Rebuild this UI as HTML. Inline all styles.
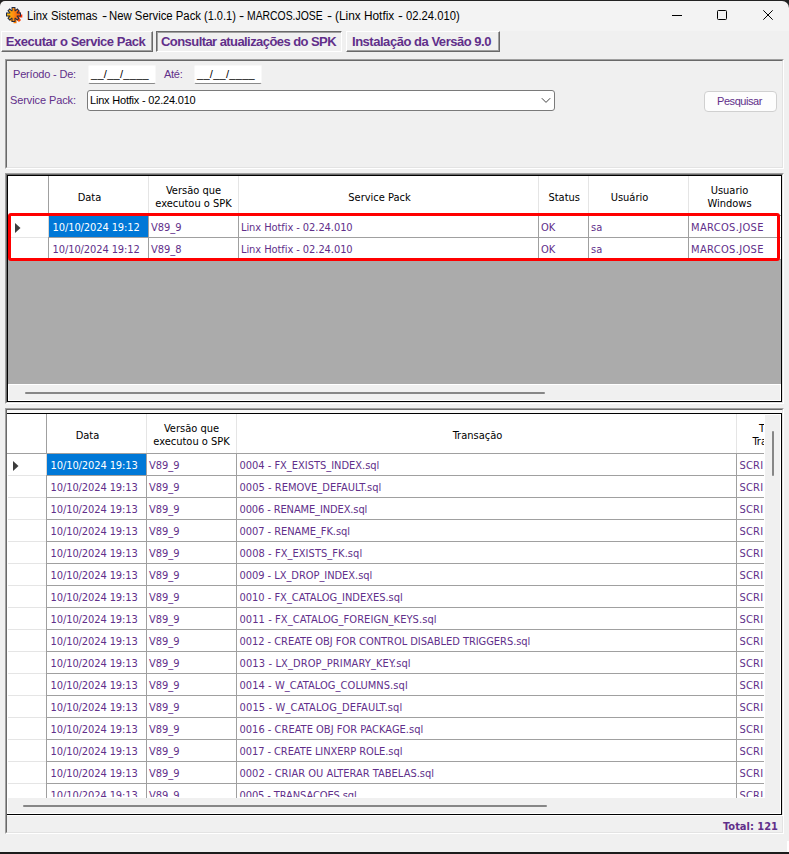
<!DOCTYPE html><html><head><meta charset='utf-8'><title>Linx Sistemas - New Service Pack</title><style>
*{box-sizing:border-box;margin:0;padding:0}
html,body{width:789px;height:854px;overflow:hidden;background:#f0f0f0}
body{position:relative;font-family:"Liberation Sans",sans-serif;font-size:11px;color:#612f8a}
#win div,#win svg{position:absolute}
#win{position:absolute;left:0;top:0;width:789px;height:854px;overflow:hidden;background:#f0f0f0}
#topdark{left:0;top:0;width:789px;height:12px;background:#222}
#titlebar{left:0;top:1px;width:789px;height:30px;background:#f3f3f3;border-radius:5px 7px 0 0}
#title{left:0;top:9px;width:600px;height:15px;font-size:12px;line-height:15px;color:#000;white-space:nowrap}
#win span.c{position:absolute;top:0;white-space:nowrap;transform-origin:0 0}
.tab{top:31px;height:21px;padding-top:1px;font-weight:bold;font-size:13px;line-height:18px;padding-right:3px;letter-spacing:-0.47px;text-align:center;white-space:nowrap;background:#f0f0f0}
.raised{border-top:1px solid #fff;border-left:1px solid #fff;border-right:1px solid #696969;border-bottom:1px solid #696969;box-shadow:inset -1px -1px 0 #a0a0a0}
.sunken{border-top:1px solid #696969;border-left:1px solid #696969;border-right:1px solid #fff;border-bottom:1px solid #fff;box-shadow:inset 1px 1px 0 #a0a0a0}
.p3d{border-style:solid;border-width:1px;border-color:#a0a0a0 #fff #fff #a0a0a0}
.p3d>.in{left:0;top:0;right:0;bottom:0;border-style:solid;border-width:1px;border-color:#696969 #e3e3e3 #e3e3e3 #696969}
.lbl{white-space:nowrap;line-height:13px}
.g{font-family:"DejaVu Sans Condensed","Liberation Sans",sans-serif;font-size:11px}
.date{height:19px;width:68px;background:#fff;border:1px solid #f8f8f8;border-bottom-color:#8a8a8a;border-radius:2px;color:#000;line-height:13px;letter-spacing:0.29px;white-space:nowrap}
.date span{position:absolute;left:2px;top:2px}
.hl,.vl{background:#a0a0a0}
.hdr{color:#000;text-align:center;line-height:13px;white-space:nowrap}
.cell{white-space:nowrap;line-height:13px}
</style></head><body><div id='win' class='abs'>
<div id='topdark'></div><div id='titlebar'></div>
<svg style="left:4px;top:5px" width="21" height="21" viewBox="-10.5 -10.5 21 21"><defs><linearGradient id="og" gradientUnits="userSpaceOnUse" x1="-7" y1="0" x2="8" y2="0"><stop offset="0" stop-color="#ffc400"/><stop offset="0.5" stop-color="#ff8a12"/><stop offset="1" stop-color="#ff4200"/></linearGradient><linearGradient id="sg" gradientUnits="userSpaceOnUse" x1="-7" y1="0" x2="8" y2="0"><stop offset="0" stop-color="#ffa000"/><stop offset="0.55" stop-color="#ff7a00"/><stop offset="0.8" stop-color="#ff3a00"/><stop offset="1" stop-color="#ff2200"/></linearGradient></defs>
<g transform="translate(-1,-1)">
<g transform="translate(1.5,1.5)" stroke="url(#sg)" stroke-width="3" fill="none"><path d="M0 -7V7.3M-7 0H7.3M-4.6 -4.6L5 5M4.6 -4.6L-4.6 4.6"/></g>
<g stroke="#1f2a44" stroke-width="3.9" fill="none"><path d="M0 -7.5V7.5M-7.5 0H7.5"/></g>
<g stroke="#1f2a44" stroke-width="3.4" fill="none"><path d="M-5 -5L5 5M5 -5L-5 5"/></g>
<g stroke="url(#og)" stroke-width="2" fill="none"><path d="M0 -6.5V6.5M-6.5 0H6.5"/><path d="M-4.2 -4.2L4.2 4.2M4.2 -4.2L-4.2 4.2" stroke-width="1.6"/></g>
<circle cx="0" cy="0" r="3.4" fill="url(#og)"/></g></svg>
<div id='title'><span class='c' style='left:27.09px;transform:scaleX(0.943)'>Linx Sistemas</span> <span class='c' style='left:101.86px;transform:scaleX(1.2995)'>-</span> <span class='c' style='left:108.99px;transform:scaleX(0.9446)'>New Service Pack</span> <span class='c' style='left:203.85px;transform:scaleX(0.9168)'>(1.0.1)</span> <span class='c' style='left:238.56px;transform:scaleX(1.2995)'>-</span> <span class='c' style='left:247.16px;transform:scaleX(0.866)'>MARCOS.JOSE</span> <span class='c' style='left:326.88px;transform:scaleX(1.2678)'>-</span> <span class='c' style='left:334.6px;transform:scaleX(0.9871)'>(Linx Hotfix</span> <span class='c' style='left:398.31px;transform:scaleX(1.2044)'>-</span> <span class='c' style='left:405.82px;transform:scaleX(0.9353)'>02.24.010)</span></div>
<svg style="left:660px;top:0" width="129" height="31" viewBox="0 0 129 31" fill="none" stroke="#000" stroke-width="1"><path d="M12 15.5H22"/><rect x="57.5" y="10.5" width="9" height="9" rx="0.9"/><path d="M103.3 10.3L112.7 19.7M112.7 10.3L103.3 19.7"/></svg>
<div class='tab raised' style='left:1px;width:152px'>Executar o Service Pack</div>
<div class='tab sunken' style='left:156px;width:186px;letter-spacing:-0.57px;padding-right:1px'>Consultar atualizações do SPK</div>
<div class='tab raised' style='left:346px;width:154px'>Instalação da Versão 9.0</div>
<div class='p3d abs' style='left:5px;top:59px;width:779px;height:110px'><div class='in'></div></div>
<div class='lbl' style='left:13px;top:68px;letter-spacing:-0.19px'>Período - De:</div>
<div class='date' style='left:88px;top:65px'><span>__/__/____</span></div>
<div class='lbl' style='left:164px;top:68px;letter-spacing:-0.27px'>Até:</div>
<div class='date' style='left:194px;top:65px'><span>__/__/____</span></div>
<div class='lbl' style='left:10px;top:94px;letter-spacing:-0.1px'>Service Pack:</div>
<div style='left:87px;top:90px;width:468px;height:21px;background:#fff;border:1px solid #7a7a7a;border-radius:3px'></div>
<div class='lbl' style='left:90px;top:94px;color:#000;letter-spacing:-0.2px'>Linx Hotfix - 02.24.010</div>
<svg style="left:541px;top:97px" width="10" height="7" viewBox="0 0 10 7" fill="none" stroke="#444" stroke-width="1"><path d="M0.8 1.2L5 5.4L9.2 1.2"/></svg>
<div style='left:704px;top:91px;width:73px;height:21px;background:#fdfdfd;border:1px solid #d0d0d0;border-radius:4px'></div>
<div class='lbl' style='left:717px;top:95px;letter-spacing:-0.43px'>Pesquisar</div>
<div class='p3d abs' style='left:5px;top:173px;width:779px;height:231px'><div class='in'></div></div>
<div style='left:7px;top:175px;width:775px;height:227px;border:1px solid #000;background:#ababab'></div>
<div style='left:8px;top:176px;width:773px;height:84px;background:#fff'></div>
<div style='left:8px;top:384px;width:773px;height:17px;background:#f0f0f0;border:1px solid #fff'></div>
<div style='left:25px;top:392px;width:520px;height:2px;background:#868686;border-radius:1px'></div>
<div style='left:48px;top:176px;width:1px;height:39px;background:#a0a0a0'></div>
<div style='left:48px;top:215px;width:1px;height:45px;background:#a0a0a0'></div>
<div style='left:48px;top:216px;width:1px;height:21px;background:#dcd6d0'></div>
<div style='left:148px;top:176px;width:1px;height:39px;background:#e5e5e5'></div>
<div style='left:148px;top:215px;width:1px;height:45px;background:#a0a0a0'></div>
<div style='left:238px;top:176px;width:1px;height:39px;background:#e5e5e5'></div>
<div style='left:238px;top:215px;width:1px;height:45px;background:#a0a0a0'></div>
<div style='left:538px;top:176px;width:1px;height:39px;background:#e5e5e5'></div>
<div style='left:538px;top:215px;width:1px;height:45px;background:#a0a0a0'></div>
<div style='left:588px;top:176px;width:1px;height:39px;background:#e5e5e5'></div>
<div style='left:588px;top:215px;width:1px;height:45px;background:#a0a0a0'></div>
<div style='left:688px;top:176px;width:1px;height:39px;background:#e5e5e5'></div>
<div style='left:688px;top:215px;width:1px;height:45px;background:#a0a0a0'></div>
<div class='hl' style='left:8px;top:215px;width:773px;height:1px'></div>
<div style='left:8px;top:237px;width:40px;height:1px;background:#e5e5e5'></div>
<div class='hl' style='left:49px;top:237px;width:732px;height:1px'></div>
<div class='hl' style='left:8px;top:259px;width:773px;height:1px'></div>
<div class='hdr g' style='left:-10.5px;width:200px;top:191px'>Data</div>
<div class='hdr g' style='left:93.5px;width:200px;top:184px'>Versão que</div><div class='hdr g' style='left:93.5px;width:200px;top:197px'>executou o SPK</div>
<div class='hdr g' style='left:279.5px;width:200px;top:191px'>Service Pack</div>
<div class='hdr g' style='left:464.20000000000005px;width:200px;top:191px'>Status</div>
<div class='hdr g' style='left:529.5px;width:200px;top:191px'>Usuário</div>
<div class='hdr g' style='left:629.5px;width:200px;top:184px'>Usuario</div><div class='hdr g' style='left:629.5px;width:200px;top:197px'>Windows</div>
<div style='left:49px;top:216px;width:99px;height:21px;background:#0078d7'></div>
<div class='cell g' style='left:52.6px;top:221px;color:#fff;letter-spacing:-0.1px'>10/10/2024 19:12</div>
<div class='cell g' style='left:151px;top:221px'>V89_9</div>
<div class='cell g' style='left:241px;top:221px;letter-spacing:-0.07px'>Linx Hotfix - 02.24.010</div>
<div class='cell g' style='left:541px;top:221px'>OK</div>
<div class='cell g' style='left:591px;top:221px'>sa</div>
<div class='cell g' style='left:691px;top:221px;letter-spacing:0.35px'>MARCOS.JOSE</div>
<div class='cell g' style='left:52.6px;top:243px;color:#612f8a;letter-spacing:-0.1px'>10/10/2024 19:12</div>
<div class='cell g' style='left:151px;top:243px'>V89_8</div>
<div class='cell g' style='left:241px;top:243px;letter-spacing:-0.07px'>Linx Hotfix - 02.24.010</div>
<div class='cell g' style='left:541px;top:243px'>OK</div>
<div class='cell g' style='left:591px;top:243px'>sa</div>
<div class='cell g' style='left:691px;top:243px;letter-spacing:0.35px'>MARCOS.JOSE</div>
<svg style="left:15px;top:223px" width="6" height="10" viewBox="0 0 6 10"><path d="M0 0L5.5 5L0 10Z" fill="#3c3c3c"/></svg>
<div style='left:8px;top:213px;width:772px;height:48px;border:3px solid #ff0000;border-radius:3px'></div>
<div class='p3d abs' style='left:5px;top:408px;width:779px;height:426px'><div class='in'></div></div>
<div style='left:7px;top:410px;width:775px;height:3px;background:#f8f8f8'></div>
<div style='left:7px;top:413px;width:775px;height:402px;border:1px solid #000;border-left:none;background:#f0f0f0'></div>
<div style='left:7px;top:414px;width:774px;height:400px;background:#f0f0f0;border:1px solid #fff'></div>
<div style='left:7px;top:414px;width:758px;height:384px;background:#fff'></div>
<div style='left:7px;top:815px;width:776px;height:1px;background:#fff'></div>
<div style='left:46px;top:414px;width:1px;height:39px;background:#a0a0a0'></div>
<div style='left:46px;top:453px;width:1px;height:345px;background:#a0a0a0'></div>
<div style='left:46px;top:454px;width:1px;height:21px;background:#dcd6d0'></div>
<div style='left:146px;top:414px;width:1px;height:39px;background:#e5e5e5'></div>
<div style='left:146px;top:453px;width:1px;height:345px;background:#a0a0a0'></div>
<div style='left:236px;top:414px;width:1px;height:39px;background:#e5e5e5'></div>
<div style='left:236px;top:453px;width:1px;height:345px;background:#a0a0a0'></div>
<div style='left:736px;top:414px;width:1px;height:39px;background:#e5e5e5'></div>
<div style='left:736px;top:453px;width:1px;height:345px;background:#a0a0a0'></div>
<div class='hl' style='left:7px;top:453px;width:757px;height:1px'></div>
<div style='left:8px;top:475px;width:38px;height:1px;background:#e5e5e5'></div>
<div class='hl' style='left:46px;top:475px;width:718px;height:1px'></div>
<div style='left:8px;top:497px;width:38px;height:1px;background:#e5e5e5'></div>
<div class='hl' style='left:46px;top:497px;width:718px;height:1px'></div>
<div style='left:8px;top:519px;width:38px;height:1px;background:#e5e5e5'></div>
<div class='hl' style='left:46px;top:519px;width:718px;height:1px'></div>
<div style='left:8px;top:541px;width:38px;height:1px;background:#e5e5e5'></div>
<div class='hl' style='left:46px;top:541px;width:718px;height:1px'></div>
<div style='left:8px;top:563px;width:38px;height:1px;background:#e5e5e5'></div>
<div class='hl' style='left:46px;top:563px;width:718px;height:1px'></div>
<div style='left:8px;top:585px;width:38px;height:1px;background:#e5e5e5'></div>
<div class='hl' style='left:46px;top:585px;width:718px;height:1px'></div>
<div style='left:8px;top:607px;width:38px;height:1px;background:#e5e5e5'></div>
<div class='hl' style='left:46px;top:607px;width:718px;height:1px'></div>
<div style='left:8px;top:629px;width:38px;height:1px;background:#e5e5e5'></div>
<div class='hl' style='left:46px;top:629px;width:718px;height:1px'></div>
<div style='left:8px;top:651px;width:38px;height:1px;background:#e5e5e5'></div>
<div class='hl' style='left:46px;top:651px;width:718px;height:1px'></div>
<div style='left:8px;top:673px;width:38px;height:1px;background:#e5e5e5'></div>
<div class='hl' style='left:46px;top:673px;width:718px;height:1px'></div>
<div style='left:8px;top:695px;width:38px;height:1px;background:#e5e5e5'></div>
<div class='hl' style='left:46px;top:695px;width:718px;height:1px'></div>
<div style='left:8px;top:717px;width:38px;height:1px;background:#e5e5e5'></div>
<div class='hl' style='left:46px;top:717px;width:718px;height:1px'></div>
<div style='left:8px;top:739px;width:38px;height:1px;background:#e5e5e5'></div>
<div class='hl' style='left:46px;top:739px;width:718px;height:1px'></div>
<div style='left:8px;top:761px;width:38px;height:1px;background:#e5e5e5'></div>
<div class='hl' style='left:46px;top:761px;width:718px;height:1px'></div>
<div style='left:8px;top:783px;width:38px;height:1px;background:#e5e5e5'></div>
<div class='hl' style='left:46px;top:783px;width:718px;height:1px'></div>
<div class='hdr g' style='left:-12.5px;width:200px;top:429px'>Data</div>
<div class='hdr g' style='left:91.5px;width:200px;top:422px'>Versão que</div><div class='hdr g' style='left:91.5px;width:200px;top:435px'>executou o SPK</div>
<div class='hdr g' style='left:377.5px;width:200px;top:429px'>Transação</div>
<div style='left:737px;top:414px;width:27px;height:39px;overflow:hidden'><div class='hdr g' style='left:-59.8px;top:8px;width:200px'>Tipo de</div><div class='hdr g' style='left:-59.8px;top:21px;width:200px'>Transação</div></div>
<div style='left:47px;top:454px;width:99px;height:21px;background:#0078d7'></div>
<div style='left:7px;top:414px;width:757px;height:383px;overflow:hidden'>
<div class='cell g' style='left:43.6px;top:45px;color:#fff;letter-spacing:-0.1px'>10/10/2024 19:13</div>
<div class='cell g' style='left:142px;top:45px'>V89_9</div>
<div class='cell g' style='left:232.5px;top:45px;letter-spacing:-0.018px'>0004 - FX_EXISTS_INDEX.sql</div>
<div class='cell g' style='left:732.5px;top:45px;letter-spacing:0.2px'>SCRI</div>
<div class='cell g' style='left:43.6px;top:67px;color:#612f8a;letter-spacing:-0.1px'>10/10/2024 19:13</div>
<div class='cell g' style='left:142px;top:67px'>V89_9</div>
<div class='cell g' style='left:232.5px;top:67px;letter-spacing:0.04px'>0005 - REMOVE_DEFAULT.sql</div>
<div class='cell g' style='left:732.5px;top:67px;letter-spacing:0.2px'>SCRI</div>
<div class='cell g' style='left:43.6px;top:89px;color:#612f8a;letter-spacing:-0.1px'>10/10/2024 19:13</div>
<div class='cell g' style='left:142px;top:89px'>V89_9</div>
<div class='cell g' style='left:232.5px;top:89px;letter-spacing:-0.116px'>0006 - RENAME_INDEX.sql</div>
<div class='cell g' style='left:732.5px;top:89px;letter-spacing:0.2px'>SCRI</div>
<div class='cell g' style='left:43.6px;top:111px;color:#612f8a;letter-spacing:-0.1px'>10/10/2024 19:13</div>
<div class='cell g' style='left:142px;top:111px'>V89_9</div>
<div class='cell g' style='left:232.5px;top:111px;letter-spacing:-0.055px'>0007 - RENAME_FK.sql</div>
<div class='cell g' style='left:732.5px;top:111px;letter-spacing:0.2px'>SCRI</div>
<div class='cell g' style='left:43.6px;top:133px;color:#612f8a;letter-spacing:-0.1px'>10/10/2024 19:13</div>
<div class='cell g' style='left:142px;top:133px'>V89_9</div>
<div class='cell g' style='left:232.5px;top:133px;letter-spacing:0.053px'>0008 - FX_EXISTS_FK.sql</div>
<div class='cell g' style='left:732.5px;top:133px;letter-spacing:0.2px'>SCRI</div>
<div class='cell g' style='left:43.6px;top:155px;color:#612f8a;letter-spacing:-0.1px'>10/10/2024 19:13</div>
<div class='cell g' style='left:142px;top:155px'>V89_9</div>
<div class='cell g' style='left:232.5px;top:155px;letter-spacing:-0.045px'>0009 - LX_DROP_INDEX.sql</div>
<div class='cell g' style='left:732.5px;top:155px;letter-spacing:0.2px'>SCRI</div>
<div class='cell g' style='left:43.6px;top:177px;color:#612f8a;letter-spacing:-0.1px'>10/10/2024 19:13</div>
<div class='cell g' style='left:142px;top:177px'>V89_9</div>
<div class='cell g' style='left:232.5px;top:177px;letter-spacing:-0.014px'>0010 - FX_CATALOG_INDEXES.sql</div>
<div class='cell g' style='left:732.5px;top:177px;letter-spacing:0.2px'>SCRI</div>
<div class='cell g' style='left:43.6px;top:199px;color:#612f8a;letter-spacing:-0.1px'>10/10/2024 19:13</div>
<div class='cell g' style='left:142px;top:199px'>V89_9</div>
<div class='cell g' style='left:232.5px;top:199px;letter-spacing:0.07px'>0011 - FX_CATALOG_FOREIGN_KEYS.sql</div>
<div class='cell g' style='left:732.5px;top:199px;letter-spacing:0.2px'>SCRI</div>
<div class='cell g' style='left:43.6px;top:221px;color:#612f8a;letter-spacing:-0.1px'>10/10/2024 19:13</div>
<div class='cell g' style='left:142px;top:221px'>V89_9</div>
<div class='cell g' style='left:232.5px;top:221px;letter-spacing:-0.044px'>0012 - CREATE OBJ FOR CONTROL DISABLED TRIGGERS.sql</div>
<div class='cell g' style='left:732.5px;top:221px;letter-spacing:0.2px'>SCRI</div>
<div class='cell g' style='left:43.6px;top:243px;color:#612f8a;letter-spacing:-0.1px'>10/10/2024 19:13</div>
<div class='cell g' style='left:142px;top:243px'>V89_9</div>
<div class='cell g' style='left:232.5px;top:243px;letter-spacing:0.12px'>0013 - LX_DROP_PRIMARY_KEY.sql</div>
<div class='cell g' style='left:732.5px;top:243px;letter-spacing:0.2px'>SCRI</div>
<div class='cell g' style='left:43.6px;top:265px;color:#612f8a;letter-spacing:-0.1px'>10/10/2024 19:13</div>
<div class='cell g' style='left:142px;top:265px'>V89_9</div>
<div class='cell g' style='left:232.5px;top:265px;letter-spacing:0.059px'>0014 - W_CATALOG_COLUMNS.sql</div>
<div class='cell g' style='left:732.5px;top:265px;letter-spacing:0.2px'>SCRI</div>
<div class='cell g' style='left:43.6px;top:287px;color:#612f8a;letter-spacing:-0.1px'>10/10/2024 19:13</div>
<div class='cell g' style='left:142px;top:287px'>V89_9</div>
<div class='cell g' style='left:232.5px;top:287px;letter-spacing:0.146px'>0015 - W_CATALOG_DEFAULT.sql</div>
<div class='cell g' style='left:732.5px;top:287px;letter-spacing:0.2px'>SCRI</div>
<div class='cell g' style='left:43.6px;top:309px;color:#612f8a;letter-spacing:-0.1px'>10/10/2024 19:13</div>
<div class='cell g' style='left:142px;top:309px'>V89_9</div>
<div class='cell g' style='left:232.5px;top:309px;letter-spacing:0.008px'>0016 - CREATE OBJ FOR PACKAGE.sql</div>
<div class='cell g' style='left:732.5px;top:309px;letter-spacing:0.2px'>SCRI</div>
<div class='cell g' style='left:43.6px;top:331px;color:#612f8a;letter-spacing:-0.1px'>10/10/2024 19:13</div>
<div class='cell g' style='left:142px;top:331px'>V89_9</div>
<div class='cell g' style='left:232.5px;top:331px;letter-spacing:-0.074px'>0017 - CREATE LINXERP ROLE.sql</div>
<div class='cell g' style='left:732.5px;top:331px;letter-spacing:0.2px'>SCRI</div>
<div class='cell g' style='left:43.6px;top:353px;color:#612f8a;letter-spacing:-0.1px'>10/10/2024 19:13</div>
<div class='cell g' style='left:142px;top:353px'>V89_9</div>
<div class='cell g' style='left:232.5px;top:353px;letter-spacing:0.014px'>0002 - CRIAR OU ALTERAR TABELAS.sql</div>
<div class='cell g' style='left:732.5px;top:353px;letter-spacing:0.2px'>SCRI</div>
<div class='cell g' style='left:43.6px;top:375px;color:#612f8a;letter-spacing:-0.1px'>10/10/2024 19:13</div>
<div class='cell g' style='left:142px;top:375px'>V89_9</div>
<div class='cell g' style='left:232.5px;top:375px;letter-spacing:-0.101px'>0005 - TRANSACOES.sql</div>
<div class='cell g' style='left:732.5px;top:375px;letter-spacing:0.2px'>SCRI</div>
</div>
<svg style="left:13px;top:461px" width="6" height="10" viewBox="0 0 6 10"><path d="M0 0L5.5 5L0 10Z" fill="#3c3c3c"/></svg>
<div style='left:772px;top:431px;width:2px;height:45px;background:#868686;border-radius:1px'></div>
<div style='left:23px;top:805px;width:524px;height:2px;background:#868686;border-radius:1px'></div>
<div class='g' style='left:677px;top:820px;width:101px;text-align:right;font-weight:bold;line-height:13px;white-space:nowrap'>Total: 121</div>
<div style='left:0;top:852px;width:789px;height:2px;background:#1c1c1c'></div>
<div style='left:787px;top:841px;width:2px;height:11px;background:#fff'></div>
</div></body></html>
